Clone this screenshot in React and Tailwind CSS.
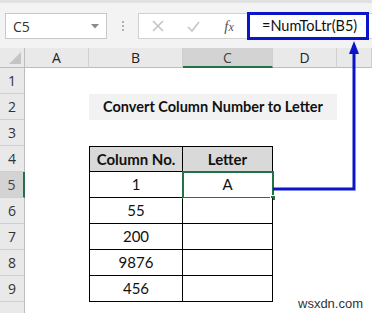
import React from "react";

const cellFont = { fontFamily: "Lato, 'Open Sans', sans-serif" };

function Toolbar() {
  return (
    <div className="relative h-[48px] bg-[#f3f3f3] border-t-[3px] border-[#e1e1e1] flex items-start pt-[10px]">
      <div className="ml-[5px] w-[102px] h-[26px] bg-white border border-[#c8c8c8] flex items-center justify-between pl-[7px] pr-[7px]">
        <span className="text-[14px] text-[#333]" style={{ fontFamily: "'Open Sans', sans-serif" }}>C5</span>
        <svg width="8" height="5" viewBox="0 0 8 5"><polygon points="0,0 8,0 4,4.5" fill="#8a8a8a" /></svg>
      </div>
      <div className="w-[31px] h-[26px] flex flex-col items-center justify-center gap-[2px]">
        <div className="w-[2px] h-[2px] bg-[#b0b0b0]" />
        <div className="w-[2px] h-[2px] bg-[#b0b0b0]" />
        <div className="w-[2px] h-[2px] bg-[#b0b0b0]" />
      </div>
      <div className="flex-1 h-[26px] bg-white border-y border-l border-[#d0d0d0] flex items-center">
        <div className="w-[37px] flex justify-center">
          <svg width="12" height="12" viewBox="0 0 12 12"><path d="M1 1 L11 11 M11 1 L1 11" stroke="#c4c4c4" strokeWidth="1.6" /></svg>
        </div>
        <div className="w-[34px] flex justify-center">
          <svg width="13" height="11" viewBox="0 0 13 11"><path d="M1 6 L5 10 L12 1" stroke="#c4c4c4" strokeWidth="1.6" fill="none" /></svg>
        </div>
        <div className="w-[38px] flex justify-center">
          <span className="italic text-[15px] text-[#555]" style={{ fontFamily: "'Liberation Serif', serif" }}>f<span className="text-[12px]">x</span></span>
        </div>
      </div>
      <div className="absolute left-[247px] top-[9px] w-[122px] h-[28px] border-[3px] border-[#0a14c8] bg-white flex items-center pl-[12px]">
        <span className="text-[14.5px] text-[#111]" style={cellFont}>=NumToLtr(B5)</span>
      </div>
    </div>
  );
}

const cols = ["A", "B", "C", "D", ""];

function Sheet() {
  const data = ["1", "55", "200", "9876", "456"];
  const cells = [];
  cells.push(
    <div key="corner" className="relative bg-[#e9e9e9] border-r border-b border-[#bdbdbd]">
      <svg className="absolute right-[3px] bottom-[3px]" width="12" height="12" viewBox="0 0 12 12"><polygon points="12,0 12,12 0,12" fill="#c4c4c4" /></svg>
    </div>
  );
  cols.forEach((c) => {
    const sel = c === "C";
    cells.push(
      <div
        key={"h" + c}
        className={
          "flex items-center justify-center text-[14px] border-r border-[#cfcfcf] " +
          (sel ? "bg-[#d3d3d3] border-b-2 border-b-[#217346] text-[#444]" : "bg-[#e9e9e9] border-b border-b-[#bdbdbd] text-[#222]")
        }
        style={{ fontFamily: "'Open Sans', sans-serif" }}
      >
        {c}
      </div>
    );
  });
  for (let r = 1; r <= 10; r++) {
    const selRow = r === 5;
    cells.push(
      <div
        key={"r" + r}
        className={
          "flex items-center justify-center text-[14px] border-b border-[#cfcfcf] " +
          (selRow ? "bg-[#d3d3d3] border-r-2 border-r-[#217346] text-[#444]" : "bg-[#e9e9e9] border-r border-r-[#bdbdbd] text-[#333]")
        }
        style={{ fontFamily: "'Open Sans', sans-serif" }}
      >
        {r < 10 ? r : ""}
      </div>
    );
    if (r === 2) {
      cells.push(<div key={"a" + r} className="bg-white" />);
      cells.push(
        <div key="title" className="col-span-3 bg-[#f2f2f2] flex items-center justify-center text-[14.5px] font-bold text-[#111]" style={cellFont}>
          Convert Column Number to Letter
        </div>
      );
      cells.push(<div key={"e" + r} className="bg-white" />);
      continue;
    }
    if (r >= 4 && r <= 9) {
      const head = r === 4;
      cells.push(<div key={"a" + r} className="bg-white" />);
      cells.push(
        <div
          key={"b" + r}
          className={
            "flex items-center justify-center text-[15px] text-[#111] border-l border-r border-b border-black " +
            (head ? "border-t bg-[#d9d9d9] font-bold" : "bg-white")
          }
          style={cellFont}
        >
          {head ? "Column No." : data[r - 5]}
        </div>
      );
      cells.push(
        <div
          key={"c" + r}
          className={
            "relative flex items-center justify-center text-[15px] text-[#111] border-r border-b border-black " +
            (head ? "border-t bg-[#d9d9d9] font-bold" : "bg-white")
          }
          style={cellFont}
        >
          {head ? "Letter" : r === 5 ? "A" : ""}
          {r === 5 && (
            <>
              <div className="absolute left-[-1px] top-[-1px] right-[-2px] bottom-[-2px] border-2 border-[#217346]" />
              <div className="absolute right-[-4px] bottom-[-4px] w-[6px] h-[6px] bg-[#217346] border border-white" />
            </>
          )}
        </div>
      );
      cells.push(<div key={"d" + r} className="bg-white" />);
      cells.push(<div key={"e" + r} className="bg-white" />);
      continue;
    }
    for (let i = 0; i < 5; i++) cells.push(<div key={"x" + r + i} className="bg-white" />);
  }
  return (
    <div className="grid grid-cols-[25px_64px_94px_90px_64px_1fr] grid-rows-[20px_repeat(10,26px)]">
      {cells}
    </div>
  );
}

export default function App() {
  return (
    <div className="relative w-[372px] h-[313px] overflow-hidden bg-white">
      <Toolbar />
      <Sheet />
      <svg className="absolute left-0 top-0 pointer-events-none" width="372" height="313">
        <polyline points="354,52 354,189 273,189" fill="none" stroke="#0a14c8" strokeWidth="3" />
        <polygon points="354,41 349,54 359,54" fill="#0a14c8" />
      </svg>
      <div className="absolute left-[298px] top-[294px] text-[13px] text-[#333]" style={{ fontFamily: "'Liberation Sans', Arial, sans-serif" }}>
        wsxdn.com
      </div>
    </div>
  );
}
